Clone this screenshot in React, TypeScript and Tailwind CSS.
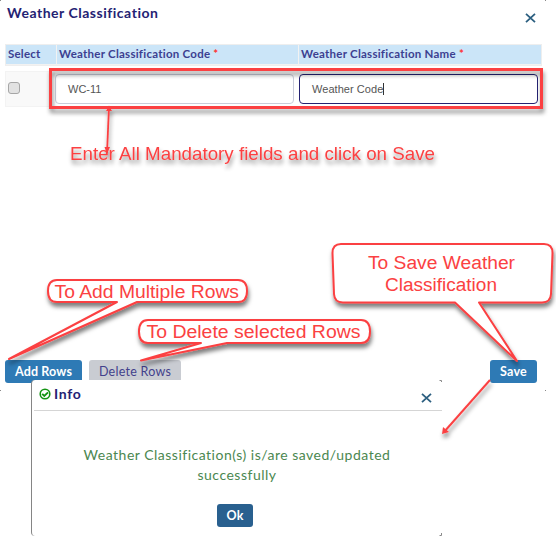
import React from "react";

const RED = "#fb4142";

function CloseIcon() {
  return (
    <svg width="11" height="10" viewBox="0 0 11 10" className="block">
      <path d="M1 0.8 L10 9.2 M10 0.8 L1 9.2" stroke="#2c5f80" strokeWidth="1.8" fill="none" />
    </svg>
  );
}

function HeaderCell({ children, className }: { children: React.ReactNode; className: string }) {
  return (
    <div className={`h-[19px] bg-[#cbe5f8] text-[11.5px] leading-[18px] font-bold text-[#3c3f91] whitespace-nowrap ${className}`}>
      {children}
    </div>
  );
}

function Annotations() {
  return (
    <svg
      className="absolute inset-0 overflow-visible"
      width="556"
      height="536"
      viewBox="0 0 556 536"
      fontFamily="'Liberation Sans', Arial, sans-serif"
      fill={RED}
    >
      <defs>
        <filter id="shade" x="-10%" y="-30%" width="125%" height="180%">
          <feDropShadow dx="1" dy="4" stdDeviation="2" floodColor="#000" floodOpacity="0.5" />
        </filter>
        <filter id="soft" filterUnits="userSpaceOnUse" x="0" y="0" width="556" height="536">
          <feDropShadow dx="1" dy="4" stdDeviation="2" floodColor="#000" floodOpacity="0.45" />
        </filter>
      </defs>
      <g filter="url(#soft)">
        <rect x="50.5" y="69.5" width="491" height="38" fill="none" stroke={RED} strokeWidth="3" />
        <path d="M109 107 L107 153" stroke={RED} strokeWidth="1.8" />
        <path d="M106 111 L109 105.5 L112 111 Z M104.5 147 L107 154 L110 147 Z" />
        <text x="70" y="160" fontSize="18.5" textLength="365" lengthAdjust="spacingAndGlyphs">
          Enter All Mandatory fields and click on Save
        </text>
        <path d="M490 380 L444 432" stroke={RED} strokeWidth="2" />
        <path d="M442 434 L443 427 L449 432 Z" />
      </g>
      <g fill="#fff" stroke={RED} strokeWidth="2" strokeLinejoin="round">
        <path
          filter="url(#shade)"
          d="M57 280 H238 Q247 280 247 291 Q247 302 238 302 H137 L9 359 L117 302 H57 Q48 302 48 291 Q48 280 57 280 Z"
        />
        <path
          filter="url(#shade)"
          d="M148 320 H361 Q370 320 370 331.5 Q370 343 361 343 H227 L141 360.5 L201 343 H148 Q139 343 139 331.5 Q139 320 148 320 Z"
        />
        <path
          filter="url(#shade)"
          d="M341 244 H544 Q552.5 244 552.5 253 L551 294 Q550.5 302.5 542 302.5 H479 L517 361 L455 302.5 H343 Q334.5 302.5 334 294 L332.5 253 Q332.5 244 341 244 Z"
        />
      </g>
      <g fontSize="18">
        <text x="54.5" y="298" textLength="184.5" lengthAdjust="spacingAndGlyphs">To Add Multiple Rows</text>
        <text x="146.5" y="338" textLength="214" lengthAdjust="spacingAndGlyphs">To Delete selected Rows</text>
        <text x="368" y="268.5" textLength="147" lengthAdjust="spacingAndGlyphs">To Save Weather</text>
        <text x="385" y="290.5" textLength="112" lengthAdjust="spacingAndGlyphs">Classification</text>
      </g>
      <g stroke="#8a8a8a" fill="none">
        <path d="M0 390.5 H1 M545 390.5 H546 M545.5 0 V1 M0 .5 H1" />
        <path d="M439.5 380.5 H441.5 V382 M441.5 533 V535.5 H439.5" />
      </g>
    </svg>
  );
}

function InfoDialog() {
  return (
    <section className="absolute left-[31px] top-[380px] h-[156px] w-[411px] rounded-sm border-l border-[#858585] bg-white">
      <header className="ml-[2px] flex h-[31px] w-[408px] items-start border-b border-[#d5d5d5] pl-[5px] pr-[10px]">
        <svg width="12" height="12" viewBox="0 0 12 12" className="mt-[8px] shrink-0">
          <circle cx="6" cy="6" r="4.8" fill="none" stroke="#149414" strokeWidth="1.6" />
          <path d="M3.2 5.8 L5.3 8 L9 4.3" fill="none" stroke="#149414" strokeWidth="1.9" />
        </svg>
        <h2 className="ml-[3px] mt-[5px] text-[14px] leading-[18px] font-bold tracking-[0.7px] text-[#242273]">Info</h2>
        <button className="ml-auto mt-[13px]"><CloseIcon /></button>
      </header>
      <p className="mt-[34px] text-center text-[14px] leading-[20px] tracking-[0.5px] text-[#4b8750]">
        Weather Classification(s) is/are saved/updated
        <br />
        successfully
      </p>
      <button className="ml-[185px] mt-[19px] block h-[23px] w-[36px] rounded-[3px] bg-[#29608f] text-[12.5px] leading-[23px] font-bold tracking-[0.1px] text-white">
        Ok
      </button>
    </section>
  );
}

export default function App() {
  return (
    <main className="relative h-[536px] w-[556px] overflow-hidden bg-white font-['Lato',sans-serif]">
      <header className="flex h-[44px] items-start justify-between pl-[7px] pr-[20px]">
        <h1 className="mt-[4px] text-[14px] leading-[18px] font-bold tracking-[0.52px] text-[#242273]">Weather Classification</h1>
        <button className="mt-[13px]"><CloseIcon /></button>
      </header>
      <div className="ml-[5px] flex h-[22px] w-[537px] gap-px border border-[#eeeeee] bg-[#f2f2f2]">
        <HeaderCell className="w-[50px] pl-[2px] tracking-[0.2px]">Select</HeaderCell>
        <HeaderCell className="w-[241px] pl-[2px] tracking-[0.25px]">
          Weather Classification Code <span className="text-[#ff3333]">*</span>
        </HeaderCell>
        <HeaderCell className="w-[242px] pl-[2px] tracking-[0.25px]">
          Weather Classification Name <span className="text-[#ff3333]">*</span>
        </HeaderCell>
      </div>
      <div className="ml-[5px] mt-[5px] flex h-[36px] w-[537px] border border-[#f3f3f3]">
        <div className="w-[49px] shrink-0 bg-[#f9f9f9] pl-[2px] pt-[10px]">
          <div className="h-[12px] w-[12px] rounded-[3px] border border-[#a6a6a6] bg-[#e2e2e2]" />
        </div>
        <div className="mt-[2px] h-[30px] w-[239px] shrink-0 rounded border border-[#c9ccda] bg-white pl-[12px] font-['Liberation_Sans',sans-serif] text-[11px] leading-[28px] text-[#555]">
          WC-11
        </div>
        <div className="ml-[5px] mt-[2px] flex h-[30px] w-[239px] shrink-0 items-center rounded border border-[#242273] bg-white pl-[12px] font-['Liberation_Sans',sans-serif] text-[11px] tracking-[0.05px] text-[#555]">
          Weather Code
          <span className="h-[12px] w-px bg-[#333]" />
        </div>
      </div>
      <div className="mt-[253px] flex items-start pl-[5px] pr-[19px] text-[12.5px] leading-[23px]">
        <button className="h-[23px] w-[77px] rounded-[3px] bg-[#2e7ab5] font-bold tracking-[0.15px] text-white">Add Rows</button>
        <button className="ml-[7px] h-[23px] w-[92px] rounded-[3px] bg-[#c9ccd2] tracking-[0.25px] text-[#42418c]">Delete Rows</button>
        <button className="ml-auto h-[23px] w-[47px] rounded-[3px] bg-[#2e7ab5] font-bold tracking-[0.2px] text-white">Save</button>
      </div>
      <InfoDialog />
      <Annotations />
    </main>
  );
}
